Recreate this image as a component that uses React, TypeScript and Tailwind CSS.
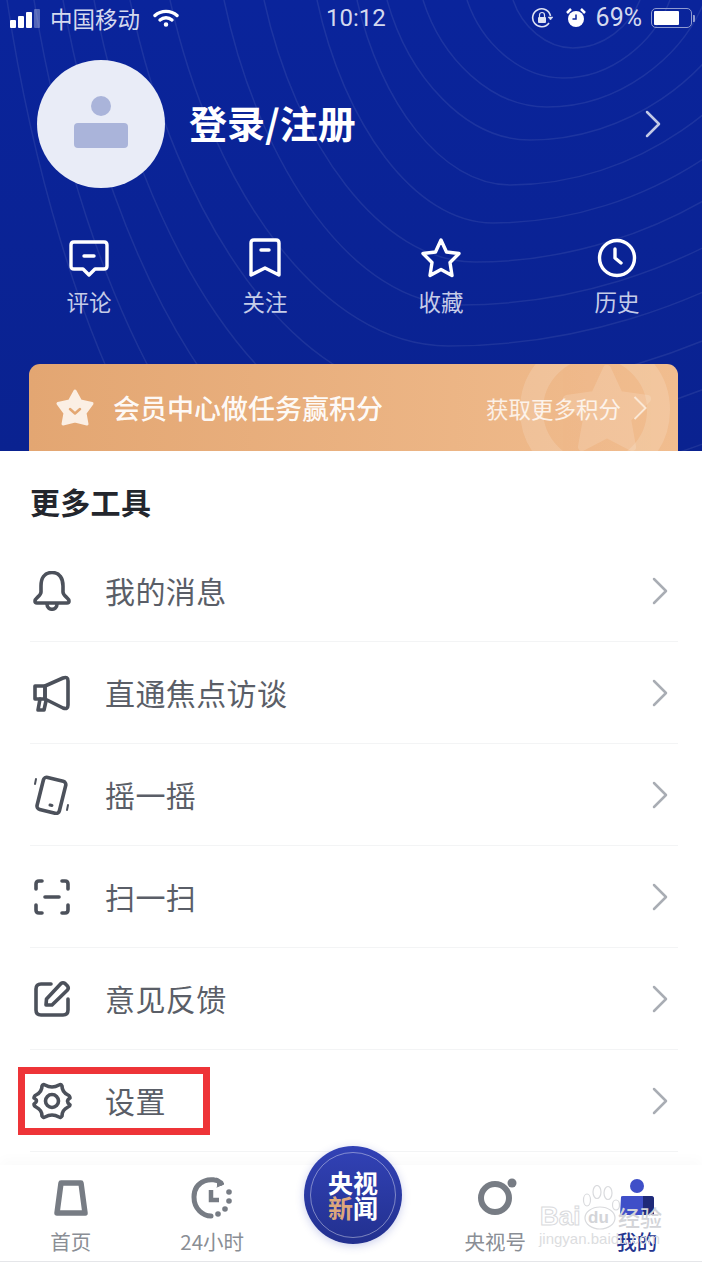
import React from 'react';

const CJK = "font-['Noto_Sans_CJK_SC',sans-serif]";

const headerActions = [
  { label: '评论', icon: <CommentIcon /> },
  { label: '关注', icon: <BookmarkIcon /> },
  { label: '收藏', icon: <StarIcon /> },
  { label: '历史', icon: <ClockIcon /> },
];

const tools = [
  { label: '我的消息', icon: <BellIcon /> },
  { label: '直通焦点访谈', icon: <MegaphoneIcon /> },
  { label: '摇一摇', icon: <ShakeIcon /> },
  { label: '扫一扫', icon: <ScanIcon /> },
  { label: '意见反馈', icon: <EditIcon /> },
  { label: '设置', icon: <GearIcon /> },
];

// left edge, bottom x, bottom y, right edge of each background contour line
const contours = [
  [513, 573, 48, 640],
  [467, 563, 78, 670],
  [423, 547, 107, 705],
  [387, 530, 140, 745],
  [357, 510, 185, 790],
  [317, 493, 223, 840],
  [264, 475, 262, 890],
  [224, 460, 305, 950],
  [170, 448, 346, 1010],
  [130, 430, 395, 1070],
  [94, 410, 445, 1130],
  [63, 390, 500, 1200],
  [34, 370, 560, 1270],
  [7, 350, 620, 1340],
];

function contourPath([lx, bx, by, rx]: number[]) {
  const c1 = `${lx + (bx - lx) * 0.15} ${by * 0.55}, ${bx - (bx - lx) * 0.45} ${by}, ${bx} ${by}`;
  const c2 = `${bx + (rx - bx) * 0.45} ${by}, ${rx - (rx - bx) * 0.15} ${by * 0.55}, ${rx} 0`;
  return `M${lx} 0 C${c1} C${c2}`;
}

export default function App() {
  return (
    <div className={`relative flex h-[1262px] w-[702px] flex-col overflow-hidden bg-white ${CJK}`}>
      <Header />
      <main className="flex-1 pr-[24px] pl-[30px]">
        <h2 className="mt-[30px] text-[30px] leading-[40px] font-bold tracking-[0.3px] text-[#23262d]">更多工具</h2>
        <ul className="mt-[19px]">
          {tools.map((tool) => (
            <ToolRow key={tool.label} label={tool.label} icon={tool.icon} />
          ))}
        </ul>
      </main>
      <TabBar />
      {/* annotation around the settings row */}
      <div className="absolute top-[1067px] left-[18px] h-[68px] w-[192px] border-[7px] border-[#ee3438]" />
      <Watermark />
    </div>
  );
}

function Header() {
  return (
    <header className="relative h-[451px] shrink-0 overflow-hidden bg-gradient-to-b from-[#0a249b] to-[#0a2290]">
      <svg className="absolute inset-0" width="702" height="451" fill="none" stroke="#ffffff" strokeOpacity="0.08" strokeWidth="1.5">
        {contours.map((c) => (
          <path key={c[2]} d={contourPath(c)} />
        ))}
      </svg>
      <div className="relative flex h-full flex-col">
        <StatusBar />
        <div className="mt-[24px] flex items-center pr-[41px] pl-[37px]">
          <div className="flex h-[128px] w-[128px] flex-col items-center justify-center rounded-full bg-[#e9ecf7]">
            <span className="h-[20px] w-[20px] rounded-full bg-[#aab4da]" />
            <span className="mt-[7px] mb-[4px] h-[25px] w-[54px] rounded-[4px] bg-[#aab4da]" />
          </div>
          <h1 className="mb-[5px] ml-[24px] flex-1 text-[38px] leading-[50px] font-bold text-white">登录/注册</h1>
          <Chevron className="text-[#c3cae6]" />
        </div>
        <div className="mt-[50px] grid grid-cols-[repeat(4,176px)] pl-[1px]">
          {headerActions.map((item) => (
            <div key={item.label} className="flex flex-col items-center">
              <div className="flex h-[40px] items-center justify-center">{item.icon}</div>
              <span className="mt-[7px] text-[22.500px] leading-[32px] text-[#c5cce8]">{item.label}</span>
            </div>
          ))}
        </div>
        <Banner />
      </div>
    </header>
  );
}

function StatusBar() {
  return (
    <div className="relative flex h-[36px] items-center pr-[7px] pl-[10px] text-[#d4d9ee]">
      <div className="flex items-end gap-[2px]">
        <span className="h-[8px] w-[6px] rounded-[1px] bg-white" />
        <span className="h-[12px] w-[6px] rounded-[1px] bg-white" />
        <span className="h-[16px] w-[6px] rounded-[1px] bg-white" />
        <span className="h-[19px] w-[6px] rounded-[1px] bg-white/30" />
      </div>
      <span className="ml-[10px] text-[22.500px] leading-[30px]">中国移动</span>
      <svg className="ml-[13px]" width="26" height="19" viewBox="0 0 26 19" fill="none" stroke="#ffffff" strokeWidth="3.400" strokeLinecap="round">
        <path d="M2 6.500 C8 1 18 1 24 6.500" />
        <path d="M7 11 C10.500 8 15.500 8 19 11" />
        <circle cx="13" cy="15.500" r="1.500" fill="#ffffff" strokeWidth="1.500" />
      </svg>
      <span className="absolute left-[326px] font-['Roboto',sans-serif] text-[24px] leading-[30px]">10:12</span>
      <div className="ml-auto flex items-center">
        <svg width="22" height="22" viewBox="0 0 22 22" fill="none" stroke="#dfe3f3" strokeWidth="1.600">
          <path d="M18 16 A9 9 0 1 1 19.500 9" />
          <path d="M17 10 L22 10 L19.500 13 Z" fill="#dfe3f3" strokeWidth="0.500" />
          <rect x="7" y="10" width="8" height="6" rx="1" fill="#dfe3f3" stroke="none" />
          <path d="M8.500 10 V8 A2.500 2.500 0 0 1 13.500 8 V10" strokeWidth="1.200" />
        </svg>
        <svg className="ml-[12px]" width="22" height="22" viewBox="0 0 22 22" fill="none">
          <circle cx="11" cy="12" r="8" fill="#ffffff" />
          <path d="M11 7.500 V12 H7.500" stroke="#0a249b" strokeWidth="1.500" />
          <path d="M2 6 L6 2 M20 6 L16 2" stroke="#ffffff" strokeWidth="2.500" />
        </svg>
        <span className="ml-[9px] font-['Roboto',sans-serif] text-[25px] leading-[30px] text-[#d4d9ee]">69%</span>
        <div className="ml-[9px] box-content h-[14px] w-[35px] rounded-[5px] border-[1.5px] border-[#8f9bd0] p-[2px]">
          <div className="h-full w-[72%] rounded-[1px] bg-white" />
        </div>
        <span className="ml-[1px] h-[7px] w-[2px] rounded-r-[1px] bg-[#8f9bd0]" />
      </div>
    </div>
  );
}

function Banner() {
  return (
    <div className="relative mt-[47px] mr-[24px] ml-[29px] flex h-[87px] items-center overflow-hidden rounded-t-[11px] bg-gradient-to-r from-[#e3a672] to-[#f1bd8f] pr-[31px] pl-[26px]">
      <div className="absolute top-[-29px] left-[491px] h-[150px] w-[150px] rounded-full border-[23px] border-white/15" />
      <svg className="absolute top-[0px] left-[532px] opacity-[0.14]" width="92" height="88" viewBox="0 0 90 88" fill="#ffffff" stroke="#ffffff" strokeWidth="8" strokeLinejoin="round">
        <path d="M45 5 L57 31 L85 35 L65 55 L70 83 L45 70 L20 83 L25 55 L5 35 L33 31 Z" />
      </svg>
      <svg width="40" height="40" viewBox="0 0 40 40" className="relative">
        <path d="M20 3 L25.500 13 L37 15.500 L30 25 L32 36 L20 33 L8 36 L10 25 L3 15.500 L14.500 13 Z" fill="#fbefe4" stroke="#fbefe4" strokeWidth="3" strokeLinejoin="round" />
        <path d="M15 21 L20 25.500 L25 21" fill="none" stroke="#e4a873" strokeWidth="2.500" strokeLinecap="round" strokeLinejoin="round" />
      </svg>
      <span className="relative ml-[18px] text-[27px] leading-[36px] font-medium text-white/95">会员中心做任务赢积分</span>
      <span className="relative ml-auto text-[22.500px] leading-[32px] text-white/80">获取更多积分</span>
      <svg className="relative ml-[12px]" width="14" height="26" viewBox="0 0 14 26" fill="none" stroke="#fbe8d6" strokeWidth="2">
        <path d="M1.500 2 L12.500 13 L1.500 24" />
      </svg>
    </div>
  );
}

function ToolRow({ label, icon }: { label: string; icon: React.ReactNode }) {
  return (
    <li className="flex h-[102px] items-center border-b border-[#f3f4f5] pr-[10px]">
      <div className="flex w-[75px] justify-start pl-[2px]">{icon}</div>
      <span className="flex-1 text-[30px] tracking-[0.4px] text-[#5a5e67]">{label}</span>
      <Chevron className="text-[#a9adb4]" />
    </li>
  );
}

function TabBar() {
  return (
    <nav className="relative grid h-[97px] shrink-0 grid-cols-[repeat(5,141.5px)] border-b border-[#e5e6e9] bg-white shadow-[0_-6px_12px_rgba(0,0,0,0.02)]">
      <TabItem label="首页" icon={<HomeTabIcon />} />
      <TabItem label="24小时" icon={<ClockTabIcon />} />
      <div />
      <TabItem label="央视号" icon={<RingTabIcon />} />
      <TabItem label="我的" icon={<MineTabIcon />} active />
      <div className="absolute top-[-19px] left-[304px] flex h-[98px] w-[98px] items-center justify-center rounded-full bg-gradient-to-b from-[#3242b6] to-[#22308f] shadow-[0_2px_8px_rgba(50,66,182,0.25)]">
        <div className="flex h-[86px] w-[86px] flex-col items-center justify-center rounded-full border border-white/40 text-[25px] leading-[25px] font-bold text-white">
          <span>央视</span>
          <span><span className="text-[#dca77c]">新</span>闻</span>
        </div>
      </div>
    </nav>
  );
}

function TabItem({ label, icon, active }: { label: string; icon: React.ReactNode; active?: boolean }) {
  return (
    <div className="flex flex-col items-center pt-[12px]">
      <div className="flex h-[42px] items-center justify-center">{icon}</div>
      <span className={`mt-[7px] text-[20.500px] leading-[30px] ${active ? 'font-medium text-[#24348f]' : 'text-[#8a8e95]'}`}>{label}</span>
    </div>
  );
}

function Watermark() {
  return (
    <div className="pointer-events-none absolute top-[1184px] left-[536px] h-[70px] w-[132px] font-['Liberation_Sans',sans-serif] text-[#d9dadd]">
      <svg className="absolute top-[1px] left-[44px]" width="40" height="45" viewBox="0 0 40 45" fill="#ffffff" fillOpacity="0.5" stroke="#d9dadd" strokeWidth="1.200">
        <ellipse cx="7" cy="15" rx="3.500" ry="6" />
        <ellipse cx="17" cy="7" rx="4" ry="6.500" />
        <ellipse cx="28" cy="8" rx="4" ry="6.500" />
        <ellipse cx="36" cy="20" rx="3.500" ry="5" />
        <ellipse cx="20" cy="33" rx="15" ry="11" />
      </svg>
      <span className="absolute top-[17px] left-[4px] text-[26px] leading-[30px] font-bold text-white/40 [-webkit-text-stroke:1px_#d9dadd]">Bai</span>
      <span className="absolute top-[24px] left-[52px] text-[17px] leading-[20px] font-bold text-[#d3d4d8]">du</span>
      <span className={`absolute top-[18px] left-[82px] text-[22px] leading-[28px] font-medium text-[#d3d4d8] ${CJK}`}>经验</span>
      <span className="absolute top-[46px] left-[3px] text-[15px] leading-[18px] whitespace-nowrap text-[#dcdde0]">jingyan.baidu.com</span>
    </div>
  );
}

function Chevron({ className }: { className?: string }) {
  return (
    <svg className={className} width="16" height="28" viewBox="0 0 16 28" fill="none" stroke="currentColor" strokeWidth="2.500" strokeLinecap="round" strokeLinejoin="round">
      <path d="M2 2 L14 14 L2 26" />
    </svg>
  );
}

function CommentIcon() {
  return (
    <svg width="40" height="40" viewBox="0 0 40 40" fill="none" stroke="#ffffff" strokeWidth="3.400" strokeLinejoin="round" strokeLinecap="round">
      <path d="M5 4 H35 Q38 4 38 7 V28 Q38 31 35 31 H26 L20 37 L14 31 H5 Q2 31 2 28 V7 Q2 4 5 4 Z" />
      <path d="M15 18 H25" />
    </svg>
  );
}

function BookmarkIcon() {
  return (
    <svg width="32" height="40" viewBox="0 0 32 40" fill="none" stroke="#ffffff" strokeWidth="3.400" strokeLinejoin="round" strokeLinecap="round">
      <path d="M5 2 H27 Q30 2 30 5 V37 L16 30 L2 37 V5 Q2 2 5 2 Z" />
      <path d="M12 12 H20" />
    </svg>
  );
}

function StarIcon() {
  return (
    <svg width="42" height="40" viewBox="0 0 42 40" fill="none" stroke="#ffffff" strokeWidth="3.400" strokeLinejoin="round">
      <path d="M21 2 L26.500 14 L39 15.500 L30 24.500 L32 37.500 L21 31.500 L10 37.500 L12 24.500 L3 15.500 L15.500 14 Z" />
    </svg>
  );
}

function ClockIcon() {
  return (
    <svg width="40" height="40" viewBox="0 0 40 40" fill="none" stroke="#ffffff" strokeWidth="3.400" strokeLinecap="round" strokeLinejoin="round">
      <circle cx="20" cy="20" r="17.500" />
      <path d="M18 11 V20 L24 25" />
    </svg>
  );
}

function ToolIcon({ children }: { children: React.ReactNode }) {
  return (
    <svg width="40" height="40" viewBox="0 0 40 40" fill="none" stroke="#4c515b" strokeWidth="3.600" strokeLinecap="round" strokeLinejoin="round">
      {children}
    </svg>
  );
}

function BellIcon() {
  return (
    <ToolIcon>
      <path d="M20 1.500 C12 1.500 9 8 9 15 V21 C9 25 3 27 3 30 Q3 32 5 32 H35 Q37 32 37 30 C37 27 31 25 31 21 V15 C31 8 28 1.500 20 1.500 Z" />
      <path d="M15 33 C15 40 25 40 25 33" />
    </ToolIcon>
  );
}

function MegaphoneIcon() {
  return (
    <ToolIcon>
      <path d="M13 13 L31 5 Q36 3 36 8 V32 Q36 37 31 35 L13 26 Z" />
      <path d="M3 13 H13 V26 H3 Z" />
      <path d="M8 26 L6 37 H12 L14 28" />
    </ToolIcon>
  );
}

function ShakeIcon() {
  return (
    <ToolIcon>
      <rect x="8" y="4" width="23" height="33" rx="3.500" transform="rotate(14 20 20)" />
      <path d="M18 30 L20 30.500" strokeWidth="3" />
      <path d="M4 4 L3 9 M36 30 L35 35" strokeWidth="2" />
    </ToolIcon>
  );
}

function ScanIcon() {
  return (
    <ToolIcon>
      <path d="M10 4 H7 Q4 4 4 7 V12" />
      <path d="M30 4 H33 Q36 4 36 7 V12" />
      <path d="M4 28 V33 Q4 36 7 36 H10" />
      <path d="M36 28 V33 Q36 36 33 36 H30" />
      <path d="M13 20 H27" />
    </ToolIcon>
  );
}

function EditIcon() {
  return (
    <ToolIcon>
      <path d="M19 5 H9 Q4 5 4 10 V31 Q4 36 9 36 H31 Q36 36 36 31 V20" />
      <path d="M14 26 L14.500 20 L29 4.500 Q31 3 33 4.500 L35.500 7 Q37 9 35.500 11 L20 26 Z" />
    </ToolIcon>
  );
}

function GearIcon() {
  return (
    <ToolIcon>
      <path d="M13 4 Q20 8 27 4 Q29 3 30 5 Q30 11 36 14 Q38 15 38 17 Q33 20 38 24 Q38 25 36 26 Q30 29 30 35 Q29 37 27 36 Q20 32 13 36 Q11 37 10 35 Q10 29 4 26 Q2 25 2 23 Q7 20 2 17 Q2 15 4 14 Q10 11 10 5 Q11 3 13 4 Z" />
      <circle cx="20" cy="20" r="6.500" />
    </ToolIcon>
  );
}

function HomeTabIcon() {
  return (
    <svg width="36" height="38" viewBox="0 0 36 38" fill="none" stroke="#777c84" strokeWidth="5.500" strokeLinejoin="round">
      <path d="M8 4 H28 L32 34 H4 Z" />
    </svg>
  );
}

function ClockTabIcon() {
  return (
    <svg width="42" height="42" viewBox="0 0 42 42" fill="none" stroke="#777c84" strokeWidth="5" strokeLinecap="round">
      <path d="M30 6 C22 -1 3 3 3 20 C3 32 12 39 20 39" />
      <path d="M26 1 L33 7 L26 10" fill="#777c84" strokeWidth="1" />
      <path d="M20 13 V23 H28" strokeWidth="4.500" strokeLinecap="butt" />
      <g fill="#777c84" stroke="none">
        <circle cx="38" cy="15" r="2.800" />
        <circle cx="38" cy="24" r="2.800" />
        <circle cx="34" cy="32" r="2.800" />
        <circle cx="27" cy="37" r="2.800" />
      </g>
    </svg>
  );
}

function RingTabIcon() {
  return (
    <svg width="44" height="40" viewBox="0 0 44 40" fill="none">
      <circle cx="22" cy="20" r="14" stroke="#777c84" strokeWidth="6" />
      <circle cx="39" cy="5" r="4.500" fill="#777c84" />
    </svg>
  );
}

function MineTabIcon() {
  return (
    <svg width="38" height="42" viewBox="0 0 38 42">
      <circle cx="19" cy="9" r="7" fill="#3f4fc8" />
      <path d="M3 20 Q3 19 5 19 H33 Q36 19 36 22 V38 H2 Z" fill="#3f4fc8" />
      <path d="M25 19 H33 Q36 19 36 22 V38 H25 Z" fill="#1f2a78" />
    </svg>
  );
}
